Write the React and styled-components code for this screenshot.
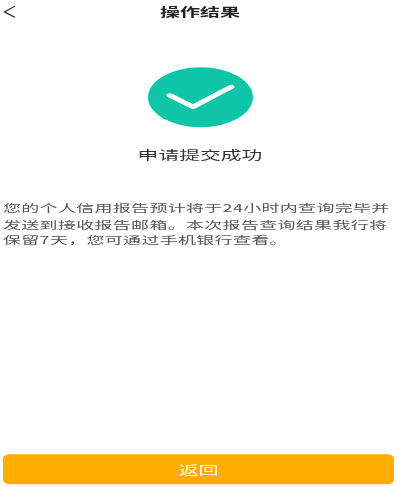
import React from "react";
import styled, { createGlobalStyle } from "styled-components";

const Global = createGlobalStyle`
  html, body { margin: 0; padding: 0; background: #fff; overflow: hidden; }
  body { width: 400px; height: 487px; }
`;

const FONT = `"Noto Sans CJK SC", "Noto Sans", sans-serif`;

const Viewport = styled.div`
  width: 400px;
  height: 487px;
  overflow: hidden;
`;

/* The reference is a tall page squeezed vertically; the page is laid out at full height and squeezed as a whole. */
const Page = styled.main`
  width: 400px;
  height: 812px;
  transform: scaleY(0.6);
  transform-origin: top left;
  filter: blur(0.35px);
  display: flex;
  flex-direction: column;
  font-family: ${FONT};
  background: #fff;
`;

const NavBar = styled.header`
  position: relative;
  height: 40px;
  flex: none;
  display: flex;
  align-items: center;
  justify-content: center;
`;

const BackIcon = styled.svg`
  position: absolute;
  left: 0;
  top: 0;
  width: 20px;
  height: 40px;
`;

const Title = styled.h1`
  margin: 0;
  font-size: 20px;
  line-height: 40px;
  font-weight: 700;
  color: #222;
`;

const Result = styled.section`
  flex: 1;
  display: flex;
  flex-direction: column;
  align-items: center;
  padding-top: 72px;
`;

const Badge = styled.div`
  width: 105px;
  height: 100px;
  border-radius: 50%;
  background: #0fc5a8;
  display: flex;
`;

const Status = styled.div`
  margin-top: 30px;
  font-size: 20.8px;
  line-height: 30px;
  color: #333;
`;

const Message = styled.p`
  margin: 61px 0 0;
  padding: 0 3px;
  align-self: stretch;
  font-size: 18px;
  letter-spacing: 0.3px;
  line-height: 26.7px;
  color: #555;
`;

const Footer = styled.footer`
  flex: none;
  padding: 0 6px 5px 3px;
`;

const ReturnButton = styled.button`
  display: block;
  width: 100%;
  height: 50px;
  border: 0;
  border-radius: 7px;
  background: #ffab00;
  color: #fff;
  font-family: ${FONT};
  font-size: 20px;
`;

export default function App() {
  return (
    <Viewport>
      <Global />
      <Page>
        <NavBar>
          <BackIcon viewBox="0 0 20 40" fill="none">
            <path d="M15 10 L4.5 20 L15 29" stroke="#222" strokeWidth="1.7" />
          </BackIcon>
          <Title>操作结果</Title>
        </NavBar>
        <Result>
          <Badge>
            <svg viewBox="0 0 105 100" width="105" height="100" fill="none">
              <path d="M22 47 L45 66 L83 33" stroke="#fff" strokeWidth="7" strokeLinecap="round" strokeLinejoin="round" />
            </svg>
          </Badge>
          <Status>申请提交成功</Status>
          <Message>您的个人信用报告预计将于24小时内查询完毕并发送到接收报告邮箱。本次报告查询结果我行将保留7天，您可通过手机银行查看。</Message>
        </Result>
        <Footer>
          <ReturnButton>返回</ReturnButton>
        </Footer>
      </Page>
    </Viewport>
  );
}
